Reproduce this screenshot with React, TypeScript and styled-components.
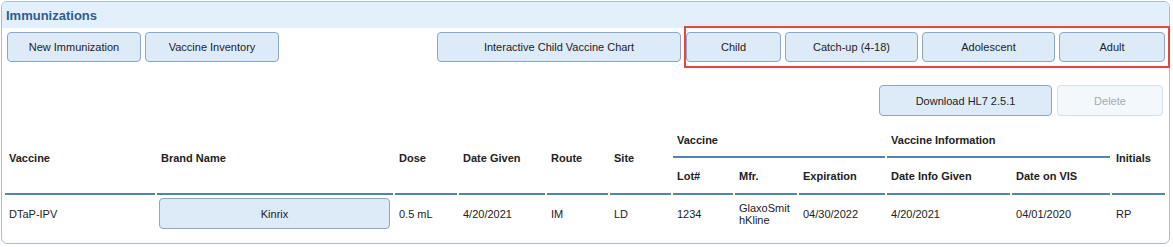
import React from 'react';
import styled, { createGlobalStyle } from 'styled-components';

const GlobalStyle = createGlobalStyle`
  html, body {
    margin: 0;
    padding: 0;
    background: #ffffff;
    font-family: "Liberation Sans", Arial, sans-serif;
    color: #222222;
  }
`;

const colors = {
  panelBorder: '#a9bdd2',
  barBg: '#e3f0fb',
  title: '#2c5d8f',
  btnBg: '#ddebf9',
  btnBorder: '#8ca7c4',
  line: '#5482ae',
  highlight: '#e8473f',
};

const Panel = styled.section`
  margin: 1px 3px 0 1px;
  height: 243px;
  box-sizing: border-box;
  border: 1px solid ${colors.panelBorder};
  border-radius: 6px;
`;

const TitleBar = styled.header`
  height: 26px;
  display: flex;
  align-items: center;
  padding-left: 4px;
  background: ${colors.barBg};
  border-radius: 5px 5px 0 0;
`;

const Title = styled.h2`
  margin: 0;
  padding-top: 1px;
  font-size: 13px;
  font-weight: 700;
  color: ${colors.title};
`;

const Toolbar = styled.div`
  display: flex;
  align-items: center;
  gap: 4px;
  padding: 4px 1px 0 5px;
`;

const Spacer = styled.div`
  flex: 1;
`;

const HighlightGroup = styled.div`
  display: flex;
  gap: 4px;
  margin-left: 1px;
  padding: 4px 3px 4px 0;
  margin-top: -4px;
  margin-bottom: -4px;
  outline: 2px solid ${colors.highlight};
`;

const Button = styled.button<{ $w: number; $h?: number; $disabled?: boolean }>`
  width: ${({ $w }) => $w}px;
  height: ${({ $h }) => $h ?? 30}px;
  flex: none;
  padding: 0;
  box-sizing: border-box;
  border: 1px solid ${({ $disabled }) => ($disabled ? '#d3dfeb' : colors.btnBorder)};
  border-radius: 4px;
  background: ${({ $disabled }) => ($disabled ? '#f3f8fc' : colors.btnBg)};
  color: ${({ $disabled }) => ($disabled ? '#a3a9b0' : '#222222')};
  font-family: "Liberation Sans", Arial, sans-serif;
  font-size: 11px;
  cursor: ${({ $disabled }) => ($disabled ? 'default' : 'pointer')};
`;

const Actions = styled.div`
  display: flex;
  justify-content: flex-end;
  gap: 5px;
  margin-top: 23px;
  padding-right: 6px;
`;

const Table = styled.table`
  margin: 7px 0 0 1px;
  width: 1164px;
  table-layout: fixed;
  border-collapse: separate;
  border-spacing: 2px 0;
  font-size: 11px;
`;

const Th = styled.th<{ $line?: boolean }>`
  padding: 0 4px;
  text-align: left;
  font-weight: 700;
  vertical-align: middle;
  white-space: nowrap;
  border-bottom: ${({ $line }) => ($line ? `2px solid ${colors.line}` : 'none')};
`;

const HeadRow = styled.tr<{ $h: number }>`
  height: ${({ $h }) => $h}px;
`;

const BodyRow = styled.tr`
  height: 37px;
`;

const Td = styled.td<{ $tight?: boolean }>`
  padding: ${({ $tight }) => ($tight ? '0 2px' : '0 4px')};
  vertical-align: middle;
  line-height: 12px;
  word-break: break-all;
`;

const columns = [150, 236, 62, 86, 61, 61, 60, 62, 86, 123, 98, 53];

const toolbarLeft = [
  { label: 'New Immunization', w: 134 },
  { label: 'Vaccine Inventory', w: 134 },
];

const schedules = [
  { label: 'Child', w: 95 },
  { label: 'Catch-up (4-18)', w: 133 },
  { label: 'Adolescent', w: 133 },
  { label: 'Adult', w: 106 },
];

export default function App() {
  return (
    <>
      <GlobalStyle />
      <Panel>
        <TitleBar>
          <Title>Immunizations</Title>
        </TitleBar>

        <Toolbar>
          {toolbarLeft.map((b) => (
            <Button key={b.label} $w={b.w}>
              {b.label}
            </Button>
          ))}
          <Spacer />
          <Button $w={244}>Interactive Child Vaccine Chart</Button>
          <HighlightGroup>
            {schedules.map((b) => (
              <Button key={b.label} $w={b.w}>
                {b.label}
              </Button>
            ))}
          </HighlightGroup>
        </Toolbar>

        <Actions>
          <Button $w={173} $h={31}>
            Download HL7 2.5.1
          </Button>
          <Button $w={106} $h={31} $disabled>
            Delete
          </Button>
        </Actions>

        <Table>
          <colgroup>
            {columns.map((w, i) => (
              <col key={i} style={{ width: w }} />
            ))}
          </colgroup>
          <thead>
            <HeadRow $h={35}>
              <Th rowSpan={2} $line>Vaccine</Th>
              <Th rowSpan={2} $line>Brand Name</Th>
              <Th rowSpan={2} $line>Dose</Th>
              <Th rowSpan={2} $line>Date Given</Th>
              <Th rowSpan={2} $line>Route</Th>
              <Th rowSpan={2} $line>Site</Th>
              <Th colSpan={3} $line>Vaccine</Th>
              <Th colSpan={2} $line>Vaccine Information</Th>
              <Th rowSpan={2} $line>Initials</Th>
            </HeadRow>
            <HeadRow $h={37}>
              <Th $line>Lot#</Th>
              <Th $line>Mfr.</Th>
              <Th $line>Expiration</Th>
              <Th $line>Date Info Given</Th>
              <Th $line>Date on VIS</Th>
            </HeadRow>
          </thead>
          <tbody>
            <BodyRow>
              <Td>DTaP-IPV</Td>
              <Td $tight>
                <Button $w={231} $h={31}>
                  Kinrix
                </Button>
              </Td>
              <Td>0.5 mL</Td>
              <Td>4/20/2021</Td>
              <Td>IM</Td>
              <Td>LD</Td>
              <Td>1234</Td>
              <Td>GlaxoSmithKline</Td>
              <Td>04/30/2022</Td>
              <Td>4/20/2021</Td>
              <Td>04/01/2020</Td>
              <Td>RP</Td>
            </BodyRow>
          </tbody>
        </Table>
      </Panel>
    </>
  );
}
